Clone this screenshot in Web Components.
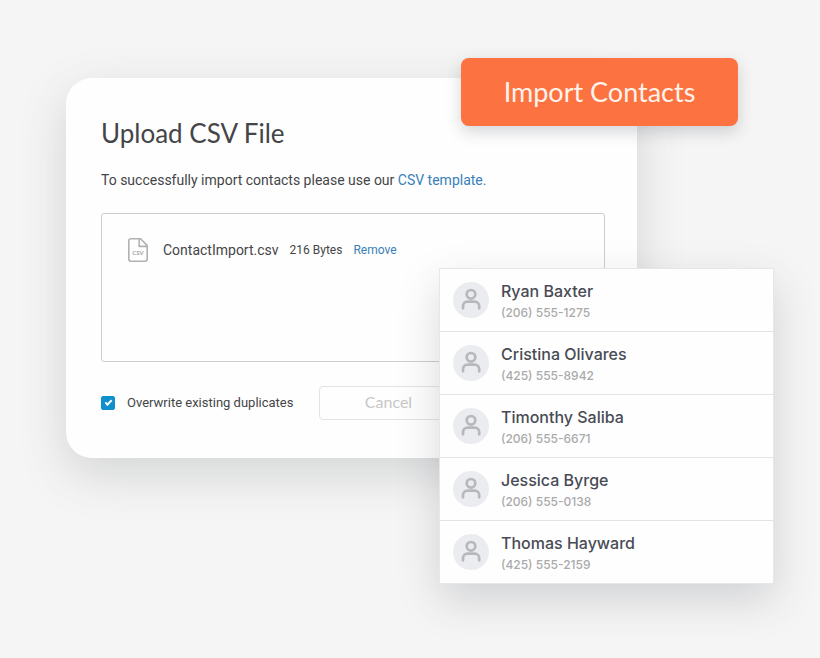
<!DOCTYPE html>
<html lang="en">
<head>
<meta charset="utf-8">
<meta name="viewport" content="width=device-width, initial-scale=1">
<title>Import Contacts</title>
<style>
  body {
    margin: 0;
    min-height: 100vh;
    background: #f5f5f5;
    color: #444548;
    font-family: Lato, "Liberation Sans", sans-serif;
  }
</style>
</head>
<body>
<import-scene>
  <upload-dialog slot="dialog" heading="Upload CSV File">
    <csv-file name="ContactImport.csv" size="216 Bytes"></csv-file>
  </upload-dialog>
  <import-button slot="action">Import Contacts</import-button>
  <contact-list slot="contacts">
    <contact-item phone="(206) 555-1275">Ryan Baxter</contact-item>
    <contact-item phone="(425) 555-8942">Cristina Olivares</contact-item>
    <contact-item phone="(206) 555-6671">Timonthy Saliba</contact-item>
    <contact-item phone="(206) 555-0138">Jessica Byrge</contact-item>
    <contact-item phone="(425) 555-2159">Thomas Hayward</contact-item>
  </contact-list>
</import-scene>

<script>
class BaseElement extends HTMLElement {
  constructor () {
    super()
    this.attachShadow({mode: 'open'})
    this.shadowRoot.innerHTML = this.template()
  }

  // copies an attribute into the node with the same id
  fill (name) {
    this.shadowRoot.getElementById(name).textContent = this.getAttribute(name) || ''
  }
}

// the three layers share one grid row, the later ones lie over the dialog
class ImportScene extends BaseElement {
  template () {
    return `
      <style>
      :host {
        display: grid;
        grid-template-columns: minmax(0, 1fr) 22px 176px 101px 36px;
        align-items: start;
        padding: 58px 46px 74px 66px;
      }
      ::slotted([slot=dialog]) {
        grid-area: 1 / 1 / 2 / 4;
        margin-top: 20px;
      }
      ::slotted([slot=action]) {
        grid-area: 1 / 3 / 2 / 5;
      }
      ::slotted([slot=contacts]) {
        grid-area: 1 / 2 / 2 / 6;
        margin-top: 210px;
      }
      </style>
      <slot name="dialog"></slot>
      <slot name="action"></slot>
      <slot name="contacts"></slot>
    `
  }
}

class UploadDialog extends BaseElement {
  template () {
    return `
      <style>
      :host {
        display: block;
        padding: 37px 32px 38px 35px;
        border-radius: 26px;
        background: #fefefe;
        box-shadow: 0 16px 48px rgba(60, 66, 70, 0.18);
      }
      h1 {
        margin: 0;
        font-size: 26px;
        line-height: 36px;
        font-weight: 400;
      }
      p {
        margin: 19px 0 23px;
        font: 14px/20px Roboto, "Liberation Sans", sans-serif;
      }
      a {
        color: #3a80b8;
        text-decoration: none;
      }
      .drop {
        min-height: 99px;
        padding: 24px 26px;
        border: 1px solid #cdcece;
        border-radius: 3px;
      }
      .footer {
        display: flex;
        align-items: center;
        gap: 26px;
        margin-top: 24px;
      }
      label {
        display: flex;
        align-items: center;
        gap: 12px;
        font: 13px/20px Roboto, "Liberation Sans", sans-serif;
        white-space: nowrap;
      }
      input {
        appearance: none;
        display: grid;
        place-items: center;
        width: 14px;
        height: 14px;
        margin: 0;
        border-radius: 2px;
        background: #fefefe;
        border: 1px solid #108fcd;
      }
      input:checked {
        background: #108fcd;
      }
      input:checked::before {
        content: '';
        width: 5px;
        height: 2px;
        border: solid #fff;
        border-width: 0 0 2px 2px;
        transform: translateY(-1px) rotate(-45deg);
      }
      button {
        width: 138px;
        height: 34px;
        padding: 0 0 3px;
        border: 1px solid #e2e3e3;
        border-radius: 4px;
        background: none;
        color: #c6c7c8;
        font: 16px Lato, "Liberation Sans", sans-serif;
      }
      </style>
      <h1 id="heading"></h1>
      <p>To successfully import contacts please use our <a href="#template">CSV template.</a></p>
      <div class="drop"><slot></slot></div>
      <div class="footer">
        <label for="overwrite"><input type="checkbox" id="overwrite" checked>Overwrite existing duplicates</label>
        <button type="button">Cancel</button>
      </div>
    `
  }

  connectedCallback () {
    this.fill('heading')
  }
}

class CsvFile extends BaseElement {
  template () {
    return `
      <style>
      :host {
        display: flex;
        align-items: center;
        gap: 11px;
        font: 12px/20px Roboto, "Liberation Sans", sans-serif;
      }
      svg {
        flex: none;
        margin-right: 4px;
      }
      text {
        font: 700 6px Lato, sans-serif;
      }
      #name {
        font-size: 14px;
      }
      button {
        padding: 0;
        border: 0;
        background: none;
        color: #3a80b8;
        font: inherit;
        cursor: pointer;
      }
      </style>
      <svg width="20" height="24" viewBox="0 0 20 24" fill="none" stroke="#b0b1b2" stroke-width="1.6" stroke-linejoin="round">
        <path d="M12.6 .8H3A2.2 2.2 0 0 0 .8 3v18A2.2 2.2 0 0 0 3 23.2h14a2.2 2.2 0 0 0 2.2-2.2V7.6z"/>
        <path d="M11.2 .8V8.4H19.2"/>
        <text x="10" y="17" text-anchor="middle" fill="#a6a7a8" stroke="none">CSV</text>
      </svg>
      <span id="name"></span>
      <span id="size"></span>
      <button type="button">Remove</button>
    `
  }

  connectedCallback () {
    this.fill('name')
    this.fill('size')
  }
}

class ImportButton extends BaseElement {
  template () {
    return `
      <style>
      :host {
        display: block;
      }
      button {
        display: block;
        width: 100%;
        padding: 16px;
        border: 0;
        border-radius: 8px;
        background: #fc7240;
        color: #fff3ec;
        font: 27px/36px Lato, "Liberation Sans", sans-serif;
        box-shadow: 0 6px 16px rgba(50, 55, 65, 0.2);
        cursor: pointer;
      }
      </style>
      <button type="button"><slot></slot></button>
    `
  }
}

class ContactList extends BaseElement {
  template () {
    return `
      <style>
      :host {
        display: block;
        border: 1px solid #e6e7e8;
        background: #fefefe;
        box-shadow: 0 16px 40px rgba(50, 55, 65, 0.18);
      }
      </style>
      <slot></slot>
    `
  }
}

class ContactItem extends BaseElement {
  template () {
    return `
      <style>
      :host {
        display: flex;
        align-items: center;
        gap: 12px;
        padding: 8px 13px;
        border-bottom: 1px solid #e2e3e4;
      }
      :host(:last-child) {
        border-bottom: 0;
      }
      svg {
        flex: none;
        border-radius: 50%;
        background: #ebecf0;
      }
      .text {
        padding-top: 3px;
      }
      .name {
        color: #484b54;
        font: 500 16px/22px Inter, sans-serif;
      }
      #phone {
        color: #a9aaac;
        font: 500 12px/21px Inter, sans-serif;
      }
      </style>
      <svg width="36" height="36" viewBox="0 0 36 36" fill="none" stroke="#b7b8ba" stroke-width="2.7" stroke-linecap="round">
        <circle cx="18" cy="12.3" r="4.3"/>
        <path d="M10 26.3V24.2a4.5 4.5 0 0 1 4.5-4.5h7.2a4.5 4.5 0 0 1 4.5 4.5v2.1"/>
      </svg>
      <div class="text">
        <div class="name"><slot></slot></div>
        <div id="phone"></div>
      </div>
    `
  }

  connectedCallback () {
    this.fill('phone')
  }
}

window.customElements.define('import-scene', ImportScene)
window.customElements.define('upload-dialog', UploadDialog)
window.customElements.define('csv-file', CsvFile)
window.customElements.define('import-button', ImportButton)
window.customElements.define('contact-list', ContactList)
window.customElements.define('contact-item', ContactItem)
</script>
</body>
</html>
